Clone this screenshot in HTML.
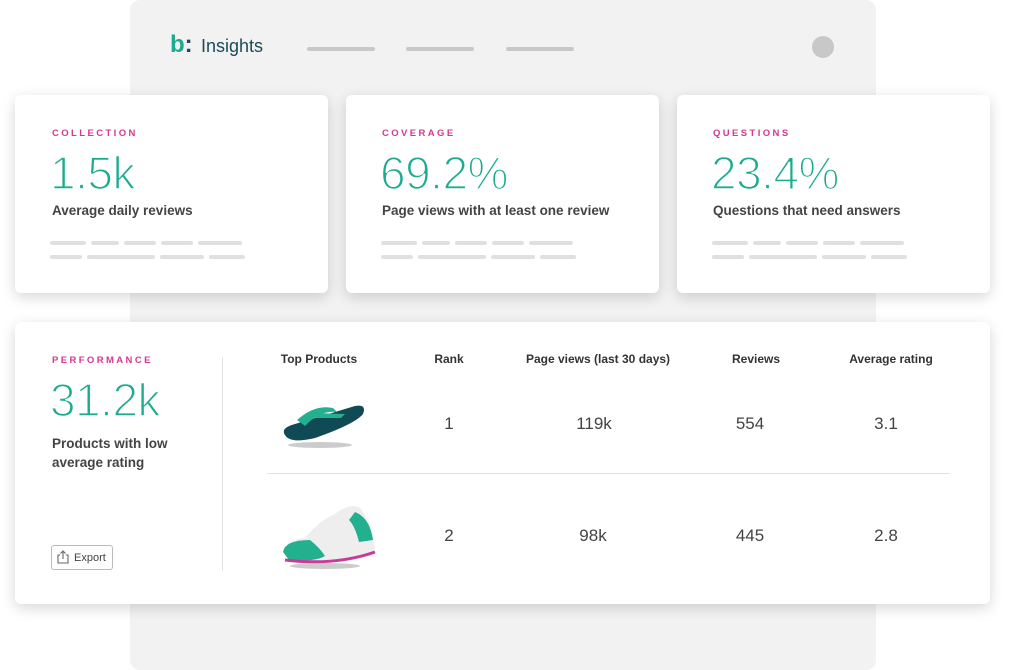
<!DOCTYPE html>
<html><head><style>
*{margin:0;padding:0;box-sizing:border-box}
body{width:1030px;height:654px;background:#fff;position:relative;overflow:hidden;font-family:"Liberation Sans",sans-serif}
.panel{position:absolute;left:130px;top:0;width:746px;height:670px;background:#f2f2f2;border-radius:10px}
.card{position:absolute;background:#fff;border-radius:6px;box-shadow:0 4px 14px rgba(0,0,0,.16)}
.lab{position:absolute;font-size:9.5px;letter-spacing:2.4px;color:#d6388f;font-weight:bold}
.big{position:absolute;font-size:46px;color:#1bab8f;font-weight:300;letter-spacing:-0.5px;-webkit-text-stroke:1.6px #fff;paint-order:normal}
.sub{position:absolute;font-size:13.5px;color:#444;font-weight:bold}
.ln{position:absolute;height:4px;background:#e0e0e0;border-radius:2px}
.th{position:absolute;top:352px;font-size:12px;font-weight:bold;color:#333;transform:translateX(-50%);white-space:nowrap}
.td{position:absolute;font-size:17px;color:#444;transform:translateX(-50%)}
</style></head><body>
<div class="panel"></div>
<div style="position:absolute;left:170px;top:31px;font-size:24px;font-weight:bold;color:#1bab8f">b<span style="color:#1b4a5a">:</span></div>
<div style="position:absolute;left:201px;top:36px;font-size:18px;color:#1b4a5a">Insights</div>
<div class="ln" style="left:307px;top:47px;width:68px;background:#c8c8c8"></div>
<div class="ln" style="left:406px;top:47px;width:68px;background:#c8c8c8"></div>
<div class="ln" style="left:506px;top:47px;width:68px;background:#c8c8c8"></div>
<div style="position:absolute;left:812px;top:36px;width:22px;height:22px;border-radius:50%;background:#c8c8c8"></div>

<div class="card" style="left:15px;top:95px;width:313px;height:198px"></div>
<div class="card" style="left:346px;top:95px;width:313px;height:198px"></div>
<div class="card" style="left:677px;top:95px;width:313px;height:198px"></div>

<div class="lab" style="left:52px;top:128px">COLLECTION</div>
<div class="big" style="left:50px;top:146px">1.5k</div>
<div class="sub" style="left:52px;top:203px">Average daily reviews</div>
<div class="lab" style="left:382px;top:128px">COVERAGE</div>
<div class="big" style="left:380px;top:146px">69.2%</div>
<div class="sub" style="left:382px;top:203px">Page views with at least one review</div>
<div class="lab" style="left:713px;top:128px">QUESTIONS</div>
<div class="big" style="left:711px;top:146px">23.4%</div>
<div class="sub" style="left:713px;top:203px">Questions that need answers</div>

<div class="ln" style="left:50px;top:241px;width:36px"></div><div class="ln" style="left:91px;top:241px;width:28px"></div><div class="ln" style="left:124px;top:241px;width:32px"></div><div class="ln" style="left:161px;top:241px;width:32px"></div><div class="ln" style="left:198px;top:241px;width:44px"></div>
<div class="ln" style="left:50px;top:255px;width:32px"></div><div class="ln" style="left:87px;top:255px;width:68px"></div><div class="ln" style="left:160px;top:255px;width:44px"></div><div class="ln" style="left:209px;top:255px;width:36px"></div>
<div class="ln" style="left:381px;top:241px;width:36px"></div><div class="ln" style="left:422px;top:241px;width:28px"></div><div class="ln" style="left:455px;top:241px;width:32px"></div><div class="ln" style="left:492px;top:241px;width:32px"></div><div class="ln" style="left:529px;top:241px;width:44px"></div>
<div class="ln" style="left:381px;top:255px;width:32px"></div><div class="ln" style="left:418px;top:255px;width:68px"></div><div class="ln" style="left:491px;top:255px;width:44px"></div><div class="ln" style="left:540px;top:255px;width:36px"></div>
<div class="ln" style="left:712px;top:241px;width:36px"></div><div class="ln" style="left:753px;top:241px;width:28px"></div><div class="ln" style="left:786px;top:241px;width:32px"></div><div class="ln" style="left:823px;top:241px;width:32px"></div><div class="ln" style="left:860px;top:241px;width:44px"></div>
<div class="ln" style="left:712px;top:255px;width:32px"></div><div class="ln" style="left:749px;top:255px;width:68px"></div><div class="ln" style="left:822px;top:255px;width:44px"></div><div class="ln" style="left:871px;top:255px;width:36px"></div>

<div class="card" style="left:15px;top:322px;width:975px;height:282px"></div>
<div class="lab" style="left:52px;top:355px">PERFORMANCE</div>
<div class="big" style="left:50px;top:373px">31.2k</div>
<div class="sub" style="left:52px;top:434px;line-height:19px">Products with low<br>average rating</div>
<div style="position:absolute;left:51px;top:545px;width:62px;height:25px;border:1px solid #bbb;border-radius:3px;font-size:11px;color:#444;padding:6px 0 0 22px">Export</div>
<svg style="position:absolute;left:57px;top:550px" width="12" height="14"><path d="M3 5H1v8h10V5H9M6 1v8M3.5 3.5L6 1l2.5 2.5" fill="none" stroke="#666" stroke-width="1.1"/></svg>
<div style="position:absolute;left:222px;top:357px;width:1px;height:214px;background:#e3e3e3"></div>
<div style="position:absolute;left:267px;top:473px;width:683px;height:1px;background:#e3e3e3"></div>
<div class="th" style="left:319px">Top Products</div>
<div class="th" style="left:449px">Rank</div>
<div class="th" style="left:598px">Page views (last 30 days)</div>
<div class="th" style="left:756px">Reviews</div>
<div class="th" style="left:891px">Average rating</div>
<div class="td" style="left:449px;top:414px">1</div><div class="td" style="left:594px;top:414px">119k</div><div class="td" style="left:750px;top:414px">554</div><div class="td" style="left:886px;top:414px">3.1</div>
<div class="td" style="left:449px;top:526px">2</div><div class="td" style="left:593px;top:526px">98k</div><div class="td" style="left:750px;top:526px">445</div><div class="td" style="left:886px;top:526px">2.8</div>

<svg style="position:absolute;left:275px;top:400px" width="95" height="50">
<ellipse cx="45" cy="45" rx="32" ry="3" fill="#ccc"/>
<path d="M10 35 Q5 28 20 24 L80 6 Q92 4 88 14 Q80 24 40 38 Q15 44 10 35Z" fill="#0f4a55"/>
<path d="M22 20 Q40 4 58 8 L62 12 Q45 10 30 26Z" fill="#22b08f"/>
<path d="M40 13 L70 14 L66 18 L40 18Z" fill="#22b08f"/>
</svg>
<svg style="position:absolute;left:275px;top:500px" width="110" height="75">
<ellipse cx="50" cy="66" rx="35" ry="3" fill="#ccc"/>
<path d="M12 50 Q8 40 30 38 Q45 20 60 14 Q75 2 85 8 Q95 20 100 48 L98 56 Q60 64 20 60 Q6 58 12 50Z" fill="#eee"/>
<path d="M8 52 Q10 40 35 40 Q45 48 50 56 Q40 62 14 60Z" fill="#22b08f"/>
<path d="M80 12 Q95 18 98 40 L84 42 Q80 26 74 20Z" fill="#22b08f"/>
<path d="M10 60 Q60 66 100 52" stroke="#c93b9a" stroke-width="3" fill="none"/>
</svg>
</body></html>
